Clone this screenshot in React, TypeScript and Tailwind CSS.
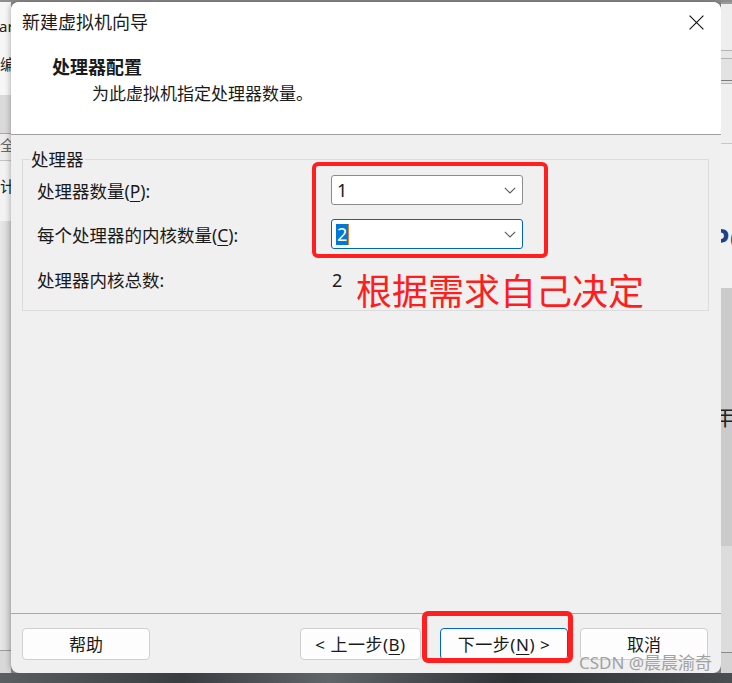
import React from "react";

function Chevron() {
  return (
    <svg width="12" height="7" viewBox="0 0 12 7" className="shrink-0">
      <polyline points="0.8,0.8 6,6 11.2,0.8" fill="none" stroke="#5c5c5c" strokeWidth="1.1" />
    </svg>
  );
}

function LeftStrip() {
  return (
    <div className="w-[11px] shrink-0 flex flex-col overflow-hidden bg-[#e4e4e4] text-[15px] leading-none text-[#222]">
      <div className="h-[93px] shrink-0 bg-[#f6f6f6] flex flex-col">
        <span className="mt-[17px] -ml-[1px] whitespace-nowrap">ar</span>
        <span className="mt-[23px] whitespace-nowrap">编辑</span>
      </div>
      <div className="h-[38px] shrink-0 bg-[#dadada]" />
      <div className="h-px shrink-0 bg-[#a8a8a8]" />
      <div className="h-[26px] shrink-0 bg-[#ececec] overflow-hidden">
        <span className="block mt-[4px] whitespace-nowrap text-[#666]">全键</span>
      </div>
      <div className="h-px shrink-0 bg-[#c4c4c4]" />
      <div className="h-[60px] shrink-0 bg-[#f2f2f2]">
        <span className="block mt-[18px] whitespace-nowrap">计划</span>
      </div>
      <div className="flex-1 bg-[linear-gradient(90deg,#e8e8e8,#d4d4d4)]" />
      <div className="h-px shrink-0 bg-[#9a9a9a]" />
      <div className="h-[22px] shrink-0 bg-[#d8d8d8]" />
    </div>
  );
}

function RightStrip() {
  return (
    <div className="w-[11px] shrink-0 flex flex-col overflow-hidden bg-[#ebebeb] leading-none">
      <div className="h-[2px] shrink-0 bg-[#9a9a9a]" />
      <div className="h-[46px] shrink-0 bg-[#eeeeee]" />
      <div className="h-px shrink-0 bg-[#b4b4b4]" />
      <div className="h-[7px] shrink-0 bg-[#e6e6e6]" />
      <div className="h-px shrink-0 bg-[#b4b4b4]" />
      <div className="h-[21px] shrink-0 bg-[#e2e2e2]" />
      <div className="h-px shrink-0 bg-[#7c7c7c]" />
      <div className="h-[2px] shrink-0 bg-[#e2e2e2]" />
      <div className="h-px shrink-0 bg-[#b4b4b4]" />
      <div className="h-[59px] shrink-0 bg-[#efefef]" />
      <div className="h-px shrink-0 bg-[#c8c8c8]" />
      <div className="h-[144px] shrink-0 bg-[#f1f1f1] overflow-hidden">
        <span className="block mt-[81px] -ml-[9px] whitespace-nowrap text-[28px] font-bold text-[#1f3f8c]">PC</span>
      </div>
      <div className="h-[258px] shrink-0 bg-[#cbcbcb] overflow-hidden">
        <span className="block mt-[117px] -ml-[8px] whitespace-nowrap text-[22px] text-[#222]">年</span>
      </div>
      <div className="flex-1 bg-[#dcdcdc]" />
      <div className="h-px shrink-0 bg-[#8a8a8a]" />
      <div className="h-[20px] shrink-0 bg-[#d4d4d4]" />
    </div>
  );
}

function Button({ children, primary, w }: { children: React.ReactNode; primary?: boolean; w: string }) {
  return (
    <div
      className={`${w} h-[32px] shrink-0 flex items-center justify-center rounded-[4px] bg-[#fdfdfd] border text-[17px] leading-none whitespace-nowrap text-[#1a1a1a] ${
        primary ? "border-[#0067c0]" : "border-[#d0d0d0]"
      }`}
    >
      {children}
    </div>
  );
}

function Dialog() {
  return (
    <div className="w-[710px] shrink-0 flex flex-col rounded-[8px] overflow-hidden bg-[#f0f0f0] shadow-[0_0_6px_rgba(0,0,0,0.35)]">
      <div className="h-[133px] shrink-0 bg-white border-b border-[#a0a0a0] flex flex-col">
        <div className="flex items-center justify-between pt-[8px] pl-[11px] pr-[17px]">
          <span className="text-[18px] leading-[24px]">新建虚拟机向导</span>
          <svg width="15" height="15" viewBox="0 0 15 15">
            <path d="M0.6 0.6 L14.4 14.4 M14.4 0.6 L0.6 14.4" stroke="#1a1a1a" strokeWidth="1.2" />
          </svg>
        </div>
        <div className="mt-[21px] pl-[41px] text-[18px] leading-[24px] font-bold">处理器配置</div>
        <div className="mt-[3px] pl-[81px] text-[17px] leading-[24px]">为此虚拟机指定处理器数量。</div>
      </div>

      <div className="flex-1 flex flex-col">
        <div className="mt-[24px] ml-[11px] w-[687px] h-[152px] shrink-0 border border-[#dcdcdc] flex flex-col text-[17.5px]">
          <span className="self-start -mt-[11px] ml-[7px] px-[1px] bg-[#f0f0f0] leading-[20px]">处理器</span>

          <div className="mt-[6px] h-[30px] flex items-center">
            <span className="w-[308px] pl-[14px] pt-[4px] leading-none whitespace-nowrap">
              处理器数量(<span className="underline underline-offset-[3px]">P</span>):
            </span>
            <div className="w-[192px] h-[30px] bg-white rounded-[3px] border border-[#8c8c8c] flex items-center justify-between pl-[5px] pr-[6px]">
              <span className="text-[18px] leading-none">1</span>
              <Chevron />
            </div>
          </div>

          <div className="mt-[14px] h-[30px] flex items-center">
            <span className="w-[308px] pl-[14px] pt-[3px] leading-none whitespace-nowrap">
              每个处理器的内核数量(<span className="underline underline-offset-[3px]">C</span>):
            </span>
            <div className="w-[192px] h-[30px] bg-white rounded-[3px] border border-[#0067c0] flex items-center justify-between pl-[4px] pr-[6px]">
              <span className="flex items-center">
                <span className="bg-[#0078d7] text-white text-[18px] leading-[21px] px-[1px]">2</span>
                <span className="w-px h-[21px] bg-[#d9822b]" />
              </span>
              <Chevron />
            </div>
          </div>

          <div className="mt-[16px] h-[30px] flex items-center">
            <span className="w-[308px] pl-[14px] pt-[1px] leading-none whitespace-nowrap">处理器内核总数:</span>
            <span className="pl-[1px] text-[18px] leading-none">2</span>
          </div>
        </div>

        <div className="flex-1" />

        <div className="h-[60px] shrink-0 border-t border-[#a8a8a8] pt-[14px] px-[11px] flex">
          <Button w="w-[128px]">帮助</Button>
          <div className="ml-[150px]">
            <Button w="w-[121px]">
              <span className="tracking-[0.5px]">
                &lt; 上一步(<span className="underline underline-offset-[3px]">B</span>)
              </span>
            </Button>
          </div>
          <div className="ml-[19px]">
            <Button w="w-[128px]" primary>
              <span className="tracking-[0.5px]">
                下一步(<span className="underline underline-offset-[3px]">N</span>) &gt;
              </span>
            </Button>
          </div>
          <div className="ml-[12px]">
            <Button w="w-[128px]">取消</Button>
          </div>
        </div>
      </div>
    </div>
  );
}

export default function App() {
  return (
    <div className="w-[732px] h-[683px] overflow-hidden relative flex flex-col bg-[#8c8c8c] font-['Noto_Sans','Noto_Sans_CJK_SC',sans-serif] text-[#1a1a1a]">
      <div className="h-[2px] shrink-0 bg-[#8e8e8e]" />
      <div className="flex h-[671px] shrink-0">
        <LeftStrip />
        <Dialog />
        <RightStrip />
      </div>
      <div className="flex-1 bg-[linear-gradient(90deg,#5a5e60_0%,#3a3d40_25%,#60656a_45%,#2f3235_70%,#4a4e50_100%)]" />

      <div className="absolute left-[312px] top-[162px] w-[236px] h-[96px] border-4 border-[#ff1f1f] rounded-[6px]" />
      <div className="absolute left-[422px] top-[611px] w-[151px] h-[52px] border-[5px] border-[#ff1f1f] rounded-[6px]" />
      <div className="absolute left-[356px] top-[274px] text-[36px] leading-none text-[#ff1d1d] whitespace-nowrap">
        根据需求自己决定
      </div>
      <div className="absolute left-[579px] top-[654px] text-[17px] leading-none text-[#a2a2a2] whitespace-nowrap">
        CSDN @晨晨渝奇
      </div>
    </div>
  );
}
